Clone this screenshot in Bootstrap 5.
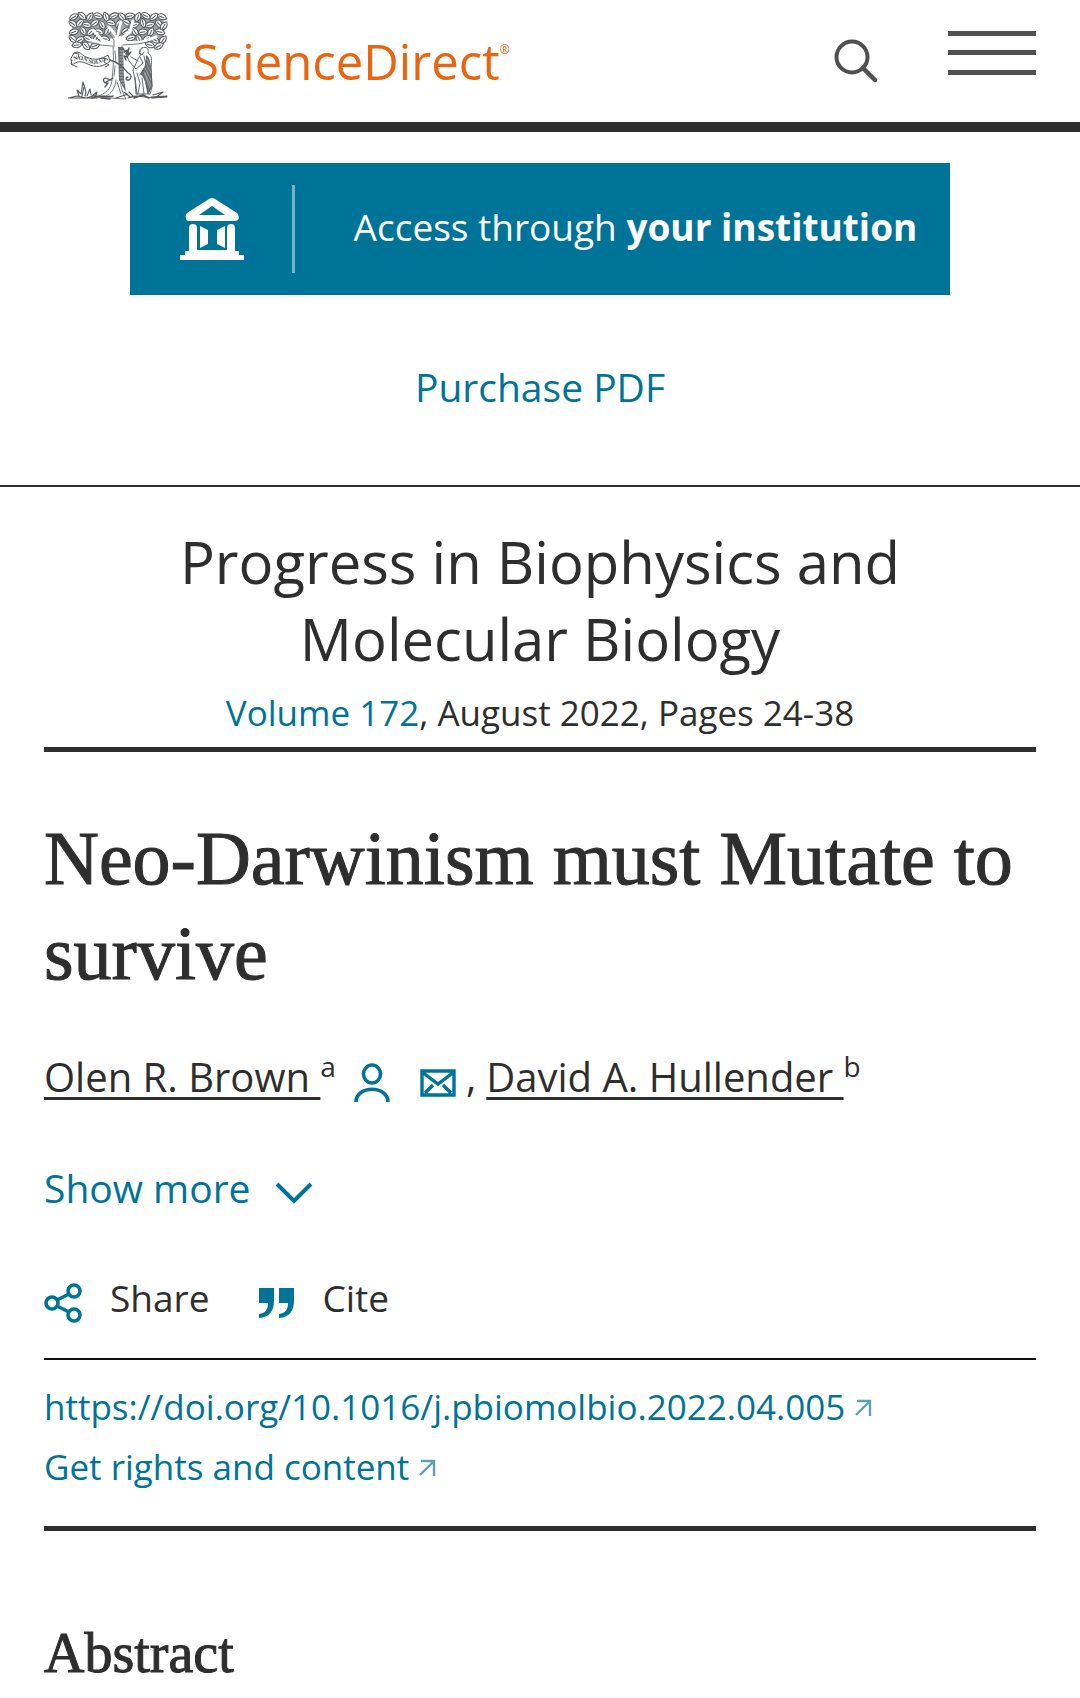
<!DOCTYPE html>
<html lang="en">
<head>
<meta charset="utf-8">
<meta name="viewport" content="width=device-width, initial-scale=1">
<title>Neo-Darwinism must Mutate to survive - ScienceDirect</title>
<link href="https://cdn.jsdelivr.net/npm/bootstrap@5.3.0/dist/css/bootstrap.min.css" rel="stylesheet">
<style>
  :root { --ink: #2e2e2e; --teal: #007398; --orange: #e9650f; }
  body { font-family: "Open Sans", "Noto Sans", sans-serif; font-size: 39px; line-height: 60px; color: var(--ink); background: #fff; }
  a { color: var(--teal); text-decoration: none; }
  svg { display: block; flex: none; }
  .plain-btn { background: none; border: 0; padding: 0; color: inherit; font: inherit; }
  .gutter { padding-left: 44px; padding-right: 44px; }

  .site-header { height: 132px; border-bottom: 10px solid var(--ink); padding-left: 68px; }
  .brand { gap: 24px; }
  .brand svg { margin-bottom: 10px; }
  .brand-name { font-size: 49px; line-height: 100px; }
  .brand, .brand:hover { color: var(--orange); }
  .brand-name sup { font-size: 12px; top: -26px; line-height: 0; vertical-align: baseline; }
  .header-tools { gap: 70px; color: #505050; }
  .menu-btn { padding-bottom: 16px; }

  .access-area { padding-top: 31px; padding-bottom: 68px; border-bottom: 2px solid var(--ink); }
  .access-btn { width: 76%; height: 132px; font-size: 37px; background: var(--teal); color: #fff; padding-left: 50px; padding-right: 33px; white-space: nowrap; }
  .access-sep { width: 3px; height: 88px; background: #73b3c9; margin-left: 48px; }
  .purchase { margin-top: 62px; }

  .journal { padding-top: 36px; }
  .journal-inner { padding-bottom: 10px; border-bottom: 5px solid var(--ink); }
  .journal-name { font-size: 58px; line-height: 77px; font-weight: 400; margin: 0; color: var(--ink); }
  .issue { font-size: 35px; line-height: 48px; margin-top: 12px; }

  .article-title, .abstract-head { font-family: "Liberation Serif", serif; font-weight: 400; -webkit-text-stroke: 1px var(--ink); }
  .article-title { font-size: 76px; line-height: 95px; margin: 59px 0 46px; }
  .author-row { font-size: 40px; gap: 10px; }
  .author-link { color: var(--ink); text-decoration: underline; text-decoration-thickness: 3px; text-underline-offset: 5px; }
  .author-row sup { font-size: 28px; line-height: 0; top: -15px; vertical-align: baseline; }
  .author-icons { gap: 30px; padding-left: 8px; padding-top: 12px; }
  .show-more { margin-top: 51px; gap: 24px; color: var(--teal); }
  .actions { margin-top: 50px; padding-bottom: 30px; gap: 50px; border-bottom: 2px solid #111; font-size: 37px; }
  .actions button { gap: 28px; }
  .show-more svg, .actions svg { margin-top: 10px; }
  .ids { padding-top: 17px; padding-bottom: 29px; border-bottom: 5px solid var(--ink); font-size: 35px; }
  .ids a { gap: 10px; }
  .abstract-head { font-size: 56px; line-height: 70px; margin: 87px 0 10px; }
</style>
</head>
<body>

<header class="site-header d-flex justify-content-between align-items-center">
  <a class="brand d-flex align-items-center" href="#" aria-label="ScienceDirect home">
    <svg width="100" height="88" viewBox="0 0 100 88" fill="none" stroke="#55585c" stroke-linecap="round" stroke-linejoin="round">
      <defs>
        <path id="leaf" d="M-5 0C-3 -4 2 -4 5 0C2 4 -3 3 -5 0ZM-3 0H2"/>
      </defs>
      <path d="M4 4L14 3L31 3L51 2L72 3L95 4L96 12L96 20L95 31L82 29L72 32L52 24L31 30L14 31L5 28L4 19Z" fill="#a2a4a7" stroke="none"/>
      <g fill="#fff" stroke-width="1">
        <use href="#leaf" transform="translate(6 5) rotate(-30)"/><use href="#leaf" transform="translate(14 4) rotate(40)"/><use href="#leaf" transform="translate(22 5) rotate(-60)"/><use href="#leaf" transform="translate(30 4) rotate(15)"/><use href="#leaf" transform="translate(38 5) rotate(70)"/><use href="#leaf" transform="translate(46 4) rotate(-25)"/><use href="#leaf" transform="translate(54 5) rotate(50)"/><use href="#leaf" transform="translate(62 4) rotate(-10)"/><use href="#leaf" transform="translate(70 5) rotate(-70)"/><use href="#leaf" transform="translate(78 4) rotate(25)"/><use href="#leaf" transform="translate(86 5) rotate(-40)"/><use href="#leaf" transform="translate(94 5) rotate(20)"/>
        <use href="#leaf" transform="translate(5 12) rotate(35)"/><use href="#leaf" transform="translate(12 11) rotate(-50)"/><use href="#leaf" transform="translate(19 13) rotate(10)"/><use href="#leaf" transform="translate(27 11) rotate(-35)"/><use href="#leaf" transform="translate(34 13) rotate(60)"/><use href="#leaf" transform="translate(43 11) rotate(15)"/><use href="#leaf" transform="translate(51 12) rotate(-70)"/><use href="#leaf" transform="translate(59 11) rotate(30)"/><use href="#leaf" transform="translate(67 13) rotate(-25)"/><use href="#leaf" transform="translate(75 11) rotate(75)"/><use href="#leaf" transform="translate(82 13) rotate(-15)"/><use href="#leaf" transform="translate(91 12) rotate(45)"/><use href="#leaf" transform="translate(96 14) rotate(-60)"/>
        <use href="#leaf" transform="translate(6 20) rotate(-20)"/><use href="#leaf" transform="translate(15 19) rotate(60)"/><use href="#leaf" transform="translate(23 20) rotate(-45)"/><use href="#leaf" transform="translate(31 20) rotate(20)"/><use href="#leaf" transform="translate(40 19) rotate(-65)"/><use href="#leaf" transform="translate(58 19) rotate(-30)"/><use href="#leaf" transform="translate(67 20) rotate(55)"/><use href="#leaf" transform="translate(75 20) rotate(-10)"/><use href="#leaf" transform="translate(83 20) rotate(-65)"/><use href="#leaf" transform="translate(92 20) rotate(15)"/>
        <use href="#leaf" transform="translate(5 27) rotate(40)"/><use href="#leaf" transform="translate(12 28) rotate(-30)"/><use href="#leaf" transform="translate(20 27) rotate(25)"/><use href="#leaf" transform="translate(29 26) rotate(-60)"/><use href="#leaf" transform="translate(37 27) rotate(10)"/><use href="#leaf" transform="translate(63 26) rotate(-20)"/><use href="#leaf" transform="translate(71 27) rotate(65)"/><use href="#leaf" transform="translate(79 27) rotate(-40)"/><use href="#leaf" transform="translate(87 28) rotate(30)"/><use href="#leaf" transform="translate(95 28) rotate(-55)"/>
        <use href="#leaf" transform="translate(9 33) rotate(-10)"/><use href="#leaf" transform="translate(18 34) rotate(45)"/><use href="#leaf" transform="translate(27 34) rotate(-20)"/><use href="#leaf" transform="translate(82 33) rotate(15)"/><use href="#leaf" transform="translate(91 34) rotate(-30)"/>
      </g>
      <path d="M48 42L49 25L41 15M49 30L34 31L23 28M50 29L62 20L65 9M53 31L74 30L88 25M49 24L53 10M36 30L25 18" stroke="#fff" stroke-width="3"/>
      <g stroke-width=".8">
        <path d="M46 35L46 28L39 19M51 24L60 17L62 10M55 33L69 32L85 29M44 34L33 33L23 31M48 23L50 12M32 29L25 22"/>
        <path d="M45 34C46 47 45 59 44 68C43 77 38 82 27 85L58 87C55 81 52 76 53 66L54 34"/>
        <path d="M47 39L48 51M47 54L46 64M48 68C47 77 43 82 38 84M49 70L53 82"/>
      </g>
      <path d="M50 35L55 35L56 67L58 80L51 68Z" fill="#65686c" stroke="none"/>
      <path d="M52 39H55M52 42H55M52 45H55M52 48H55M52 51H55M52 54H55M52 57H55M52 60H55M52 63H55M52 66H55M53 69H56M54 72H56" stroke="#e7e7e8" stroke-width=".6"/>
      <path d="M42 48C53 51 57 58 60 61C65 63 63 69 59 68C57 67 58 65 60 65M45 66L38 70M43 68L37 66C34 67 36 72 39 71M40 71L37 75" stroke-width="1.3"/>
      <g stroke-width="1">
        <path d="M6 41C12 38 13 43 18 45C27 49 34 47 40 43L42 49C36 55 27 56 20 52C13 49 9 49 4 53L3 47Z" fill="#fff"/>
        <path d="M6 41L11 42L10 46M40 48L37 46L36 50L41 53L37 55M4 48L3 52L9 55"/>
      </g>
      <path id="motto-line" d="M6 49C13 45 18 51 25 52C30 52 35 50 40 47" stroke="none"/>
      <text font-family="Liberation Serif, serif" font-size="6" font-weight="700" fill="#44474a" stroke="none"><textPath href="#motto-line">NON SOLUS</textPath></text>
      <g stroke-width=".9">
        <path d="M74 36C79 34 81 37 80 41C84 43 84 49 83 55L84 75L82 82H68L67 68L65 58L70 47L73 42C71 40 71 37 74 36Z" fill="#fff"/>
        <path d="M79 44C83 48 83 60 84 74L80 82C78 73 78 67 73 62L77 55Z" fill="#6a6d71"/>
        <path d="M73 38L71 41L74 43L76 40M72 45L75 51L68 57L61 49L58 42M70 49L63 45M69 61L72 71L70 82M74 66L76 82M76 44L78 53L72 63M67 65L69 82"/>
        <path d="M56 40L60 38L58 42L62 41L59 45L56 44L58 48M55 36L57 40M61 36L60 40M63 40L60 43" stroke-width="1.4"/>
      </g>
      <path d="M79 47L82 53M78 51L83 61M77 56L83 68M77 61L83 74M76 60L82 76" stroke="#c1c3c5" stroke-width=".6"/>
      <g stroke-width="1.1">
        <path d="M0 86L9 84L18 86L29 83M2 86H29M11 84L9 78L13 82L15 70L18 80L17 84M19 84L22 77L23 83M24 84L29 80L27 85M14 84L16 75M60 86L69 84L85 86L99 85M56 80L62 85L68 84M61 80L65 84M85 83L95 80L87 86M83 85L99 84M48 86L60 82"/>
        <path d="M24 86C31 82 38 86 45 84M33 86L42 87M66 86L75 83L81 86" stroke-width="1.6"/>
      </g>
    </svg>
    <span class="brand-name">ScienceDirect<sup>®</sup></span>
  </a>
  <div class="header-tools d-flex align-items-center gutter">
    <button class="plain-btn" type="button" aria-label="Search">
      <svg width="44" height="44" viewBox="0 0 44 44" fill="none" stroke="currentColor" stroke-width="4"><circle cx="18" cy="18" r="15.5"/><path d="M29 29L41 41" stroke-width="4.5" stroke-linecap="round"/></svg>
    </button>
    <button class="plain-btn menu-btn" type="button" aria-label="Menu">
      <svg width="88" height="44" viewBox="0 0 88 44" fill="currentColor"><path d="M0 0H88V5H0ZM0 19H88V24H0ZM0 39H88V44H0Z"/></svg>
    </button>
  </div>
</header>

<main>
  <section class="access-area d-flex flex-column align-items-center">
    <button class="plain-btn access-btn d-flex align-items-center" type="button">
      <svg width="64" height="62" viewBox="0 0 64 62" fill="#fff">
        <path fill-rule="evenodd" d="M29 1Q32 -1 35 1L57 15Q59 17 59 20Q58 23 55 23H9Q6 23 6 20Q5 17 7 15ZM32 8L19 17H45Z"/>
        <path d="M9 30Q9 26 13 26Q17 26 17 30V52H47V30Q47 26 51 26Q55 26 55 30V53H59V57H64V62H0V57H5V53H9Z"/>
        <path d="M19 28H45V52H19Z" fill="#007398"/>
        <path d="M20 28L28 32V46L20 50ZM45 28L37 32V46L45 50Z"/>
      </svg>
      <span class="access-sep"></span>
      <span class="flex-grow-1 text-end pb-1">Access through <strong>your institution</strong></span>
    </button>
    <a class="purchase" href="#">Purchase PDF</a>
  </section>

  <section class="journal gutter text-center">
    <div class="journal-inner">
      <h2 class="journal-name">Progress in Biophysics and<br>Molecular Biology</h2>
      <div class="issue"><a href="#">Volume 172</a>, August 2022, Pages 24-38</div>
    </div>
  </section>

  <article class="gutter">
    <h1 class="article-title">Neo-Darwinism must Mutate to survive</h1>

    <div class="author-row d-flex align-items-center">
      <span><a class="author-link" href="#">Olen R. Brown&nbsp;</a><sup>a</sup></span>
      <span class="author-icons d-flex align-items-center">
        <a href="#" aria-label="Author profile">
          <svg width="36" height="40" viewBox="0 0 36 40" fill="none" stroke="currentColor" stroke-width="3.6"><ellipse cx="18" cy="11" rx="8.5" ry="9"/><path d="M2 39C2 22 34 22 34 39"/></svg>
        </a>
        <a href="#" aria-label="Email author">
          <svg width="36" height="28" viewBox="0 0 36 28" fill="none" stroke="currentColor" stroke-width="3.4"><path d="M2 2H34V26H2ZM2 3L18 15L34 3M5 24L13 16M31 24L23 16"/></svg>
        </a>
      </span>
      <span>,</span>
      <span><a class="author-link" href="#">David A. Hullender&nbsp;</a><sup>b</sup></span>
    </div>

    <button class="plain-btn show-more d-flex align-items-center" type="button">Show more
      <svg width="38" height="22" viewBox="0 0 38 22" fill="none" stroke="currentColor" stroke-width="4"><path d="M2 2L19 19L36 2"/></svg>
    </button>

    <div class="actions d-flex">
      <button class="plain-btn d-flex align-items-center" type="button">
        <svg width="38" height="40" viewBox="0 0 38 40" fill="none" stroke="#007398" stroke-width="3.6"><circle cx="8" cy="20" r="6"/><circle cx="30" cy="8" r="6"/><circle cx="30" cy="32" r="6"/><path d="M13 17L25 11M13 23L25 29"/></svg>
        Share
      </button>
      <button class="plain-btn d-flex align-items-center" type="button">
        <svg width="35" height="30" viewBox="0 0 35 30" fill="#007398"><path d="M0 0H15V12C15 23 11 29 0 30V26C7 25 9 21 9 15H0ZM20 0H35V12C35 23 31 29 20 30V26C27 25 29 21 29 15H20Z"/></svg>
        Cite
      </button>
    </div>

    <div class="ids d-flex flex-column align-items-start">
      <a class="d-flex align-items-center" href="#">https://doi.org/10.1016/j.pbiomolbio.2022.04.005
        <svg width="17" height="17" viewBox="0 0 17 17" fill="none" stroke="#619fb2" stroke-width="2.4"><path d="M2 2H15V17M15 2L1 16"/></svg>
      </a>
      <a class="d-flex align-items-center" href="#">Get rights and content
        <svg width="17" height="17" viewBox="0 0 17 17" fill="none" stroke="#619fb2" stroke-width="2.4"><path d="M2 2H15V17M15 2L1 16"/></svg>
      </a>
    </div>

    <h2 class="abstract-head">Abstract</h2>
  </article>
</main>
<script src="https://cdn.jsdelivr.net/npm/bootstrap@5.3.0/dist/js/bootstrap.bundle.min.js"></script>
</body>
</html>
